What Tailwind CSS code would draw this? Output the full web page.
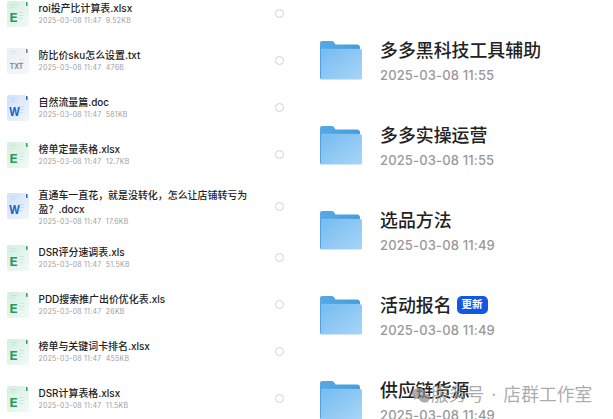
<!DOCTYPE html>
<html lang="zh-CN">
<head>
    <meta charset="UTF-8">
    <meta name="viewport" content="width=device-width, initial-scale=1.0">
    <title>文件列表</title>
    <script src="https://cdn.jsdelivr.net/npm/@tailwindcss/browser@4"></script>
</head>
<body class="bg-white h-screen overflow-hidden font-['Inter','Noto_Sans_CJK_SC',sans-serif]">

<!-- Shared icons -->
<svg class="absolute size-0">
    <defs>
        <linearGradient id="green" x1="0" y1="0" x2="1" y2="1">
            <stop offset="0" stop-color="#d3efdf"/>
            <stop offset="1" stop-color="#f3faf6"/>
        </linearGradient>
        <linearGradient id="gray" x1="0" y1="0" x2="1" y2="1">
            <stop offset="0" stop-color="#e9eff2"/>
            <stop offset="1" stop-color="#f5f8fa"/>
        </linearGradient>
        <linearGradient id="blue" x1="0" y1="0" x2="1" y2="1">
            <stop offset="0" stop-color="#cfe1fb"/>
            <stop offset="1" stop-color="#f0f6fe"/>
        </linearGradient>
        <linearGradient id="folder-back" x1="0" y1="0" x2="1" y2="0">
            <stop offset="0" stop-color="#55a9e5"/>
            <stop offset="1" stop-color="#479cdc"/>
        </linearGradient>
        <linearGradient id="folder-front" x1="0" y1="0" x2="1" y2="1">
            <stop offset="0" stop-color="#74bbf0"/>
            <stop offset="1" stop-color="#a9d5f8"/>
        </linearGradient>
    </defs>
    <symbol id="folder" viewBox="0 0 42 39">
        <path d="M0 2Q0 0 2 0H12Q13.500 0 14.200 1.500L15.500 3.600H37Q39.500 3.600 40 6V12H0Z" fill="url(#folder-back)"/>
        <path d="M0 8H40Q42 8 42 10V37.500Q42 38.500 41 38.500H1Q0 38.500 0 37.500Z" fill="url(#folder-front)"/>
        <path d="M2.500 8.300H40" stroke="#8bc8f5" stroke-width=".6"/>
        <path d="M.5 8V37" stroke="#4fa2df" stroke-width="1"/>
    </symbol>
</svg>

<div class="flex h-screen overflow-hidden">
    <ul id="files" class="w-[310px] shrink-0 -mt-[10px]"></ul>
    <ul id="folders" class="grow pl-[10px] pt-[18px]"></ul>
</div>

<!-- Watermark lies over the last folder row -->
<div class="absolute left-[412px] top-[381px] flex items-center h-7 text-[17.8px] text-[#8f8f8f]/75 whitespace-nowrap">
    <svg class="w-[18px] h-[16px] shrink-0" viewBox="0 0 18 16">
        <path fill="#8f8f8f" fill-opacity=".75" d="M7 1C3.100 1 0 3.500 0 6.700c0 1.800 1 3.300 2.500 4.400L2 13l2.300-1.200c.7.200 1.400.3 2.200.3C6 8.500 9 5.700 13 5.700 12.300 3 9.900 1 7 1Z"/>
        <path fill="#8f8f8f" fill-opacity=".75" d="M12.500 6.500C9.500 6.500 7 8.500 7 11s2.500 4.500 5.500 4.500c.6 0 1.200-.1 1.800-.3L16 16l-.4-1.500C17 13.700 18 12.400 18 11c0-2.500-2.500-4.500-5.500-4.500Z"/>
    </svg>
    <span class="ml-[1px]">服务号</span>
    <span class="w-[19px] text-center">·</span>
    <span>店群工作室</span>
</div>

<script>
    var files = [
        {name: 'roi投产比计算表.xlsx', date: '2025-03-08 11:47', size: '9.52KB', type: 'E'},
        {name: '防比价sku怎么设置.txt', date: '2025-03-08 11:47', size: '476B', type: 'TXT'},
        {name: '自然流量篇.doc', date: '2025-03-08 11:47', size: '581KB', type: 'W'},
        {name: '榜单定量表格.xlsx', date: '2025-03-08 11:47', size: '12.7KB', type: 'E'},
        {name: '直通车一直花，就是没转化，怎么让店铺转亏为<br>盈？.docx', date: '2025-03-08 11:47', size: '17.6KB', type: 'W', tall: true},
        {name: 'DSR评分速调表.xls', date: '2025-03-08 11:47', size: '51.5KB', type: 'E'},
        {name: 'PDD搜索推广出价优化表.xls', date: '2025-03-08 11:47', size: '26KB', type: 'E'},
        {name: '榜单与关键词卡排名.xlsx', date: '2025-03-08 11:47', size: '455KB', type: 'E'},
        {name: 'DSR计算表格.xlsx', date: '2025-03-08 11:47', size: '11.5KB', type: 'E'}
    ];
    var folders = [
        {name: '多多黑科技工具辅助', date: '2025-03-08 11:55'},
        {name: '多多实操运营', date: '2025-03-08 11:55'},
        {name: '选品方法', date: '2025-03-08 11:49'},
        {name: '活动报名', date: '2025-03-08 11:49', badge: '更新'},
        {name: '供应链货源', date: '2025-03-08 11:49'}
    ];
    var icons = {
        E: {bg: 'green', tab: '#2c9a63', ink: '#259a5d', size: 12, x: 2.4, width: 8.2},
        W: {bg: 'blue', tab: '#2867b8', ink: '#1e62c4', size: 11.5, x: 2, width: 11},
        TXT: {bg: 'gray', tab: '#66788a', ink: '#7d8c9b', size: 7.6, x: 2.8, width: 13.5}
    };

    function fileIcon(type) {
        var i = icons[type];
        return '<svg class="w-[22px] h-[26px] shrink-0 font-[\'Liberation_Sans\',sans-serif]" viewBox="0 0 22 26">' +
            '<path d="M2 0H18L22 4V24Q22 26 20 26H2Q0 26 0 24V2Q0 0 2 0Z" fill="url(#' + i.bg + ')"/>' +
            '<path d="M4 3.500H10M4 6H8M12 11.500H17M12 14.500H17M12 17.500H16" stroke="' + i.tab + '" stroke-opacity=".13"/>' +
            '<path d="M19 1H20.500V5H19.800Q19 5 19 4Z" fill="' + i.tab + '"/>' +
            '<text x="' + i.x + '" y="21" textLength="' + i.width + '" lengthAdjust="spacingAndGlyphs" font-size="' + i.size + '" font-weight="700" fill="' + i.ink + '">' + type + '</text>' +
            '</svg>';
    }

    document.getElementById('files').innerHTML = files.map(function (f) {
        return '<li class="flex items-center pl-[6.5px] pr-[26.5px] ' + (f.tall ? 'h-[56px]' : 'h-[47px]') + '">' +
            fileIcon(f.type) +
            '<div class="ml-[10px] grow whitespace-nowrap ' + (f.tall ? 'pt-[3px]' : '') + '">' +
            '<p class="text-[9.95px] leading-[14px] font-[450] text-[#222]">' + f.name + '</p>' +
            '<p class="text-[7px] leading-[12px] text-[#a0a0a0] tracking-[.22px]">' + f.date + '<span class="ml-[4.5px]">' + f.size + '</span></p>' +
            '</div>' +
            '<span class="size-[9px] shrink-0 rounded-full border border-[#d2d2d2]"></span>' +
            '</li>';
    }).join('');

    document.getElementById('folders').innerHTML = folders.map(function (f) {
        return '<li class="flex items-center h-[85px]">' +
            '<svg class="w-[42px] h-[39px] shrink-0"><use href="#folder"/></svg>' +
            '<div class="ml-[18px] pt-[3px] whitespace-nowrap">' +
            '<div class="flex items-center h-[25px]">' +
            '<p class="text-[17.9px] leading-[25px] font-medium text-[#222]">' + f.name + '</p>' +
            (f.badge ? '<span class="ml-[5px] -mt-[1px] w-[31px] h-[18px] rounded-[5px] bg-[#1557e5] text-white text-[10.5px] leading-[18px] font-bold text-center">' + f.badge + '</span>' : '') +
            '</div>' +
            '<p class="text-[13px] leading-[24px] font-[450] text-[#999] tracking-[.15px]">' + f.date + '</p>' +
            '</div>' +
            '</li>';
    }).join('');
</script>
</body>
</html>
